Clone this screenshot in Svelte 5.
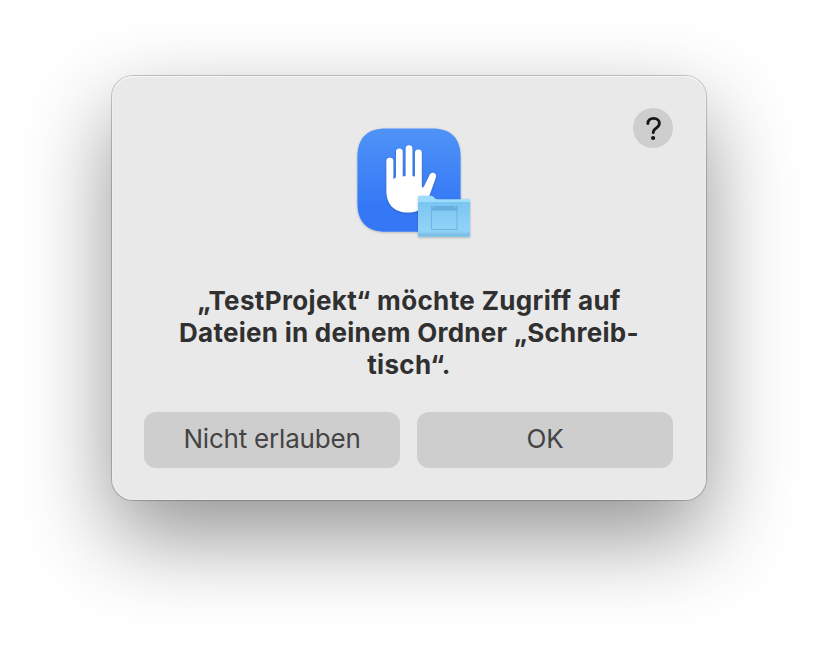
<script>
  const lines = [
    { text: '„TestProjekt“ möchte Zugriff auf', tracking: 0.36 },
    { text: 'Dateien in deinem Ordner „Schreib-', tracking: 0.26 },
    { text: 'tisch“.', tracking: 0.3 }
  ];
</script>

<main>
  <div class="dialog" role="alertdialog" aria-labelledby="title">
    <button class="help" aria-label="Hilfe">
      <svg width="40" height="40" viewBox="0 0 40 40" fill="none">
        <path d="M14.8 15.6C15 12.2 17.2 10.4 20.6 10.4C24.1 10.4 26.4 12.4 26.4 15.3C26.4 17.6 25.2 18.9 23 20.2C20.9 21.5 20.3 22.4 20.2 24.7" stroke="#161616" stroke-width="2.8" stroke-linecap="round" stroke-linejoin="round" />
        <circle cx="20.1" cy="30" r="2.1" fill="#161616" />
      </svg>
    </button>

    <svg class="icon" width="114" height="114" viewBox="357 128 114 114">
      <defs>
        <linearGradient id="tile" x1="0" y1="0" x2="0" y2="1">
          <stop offset="0" stop-color="#5093f6" />
          <stop offset="0.75" stop-color="#3478f6" />
          <stop offset="1" stop-color="#3478f6" />
        </linearGradient>
        <linearGradient id="front" x1="0" y1="0" x2="0" y2="1">
          <stop offset="0" stop-color="#7bc5f2" />
          <stop offset="0.82" stop-color="#91d3f8" />
          <stop offset="0.9" stop-color="#88caee" />
          <stop offset="1" stop-color="#7dbfe5" />
        </linearGradient>
        <filter id="soft" x="-20%" y="-20%" width="140%" height="140%">
          <feDropShadow dx="0" dy="0.7" stdDeviation="0.9" flood-color="#000" flood-opacity="0.25" />
        </filter>
      </defs>
      <path filter="url(#soft)" fill="url(#tile)" d="M386 128.4H432C451 128.4 460.6 138 460.6 157V203C460.6 222 451 231.8 432 231.8H386C367 231.8 357.4 222 357.4 203V157C357.4 138 367 128.4 386 128.4Z" />
      <path filter="url(#soft)" fill="#fff" d="M386.4 161.2A3.45 3.45 0 0 1 393.3 161.2V179.3Q394.3 178.4 396 177.6V151.2A3.4 3.4 0 0 1 402.7 151.2V176.4Q404.2 176.1 405.7 176V148.7A3.35 3.35 0 0 1 412.4 148.7V176.1Q413.7 176.3 415 176.8V153A3.4 3.4 0 0 1 421.8 153V187.3Q422.8 188.2 424 186.5L429.6 175C430.5 173.3 432.3 172.3 434 173C435.8 173.7 436.5 175.5 435.9 177.3L429.8 194.5C426 206.5 419.5 212.6 408.5 212.6C394 212.6 386.4 204 386.4 191Z" />
      <g filter="url(#soft)">
        <path fill="#9ddcfb" d="M418 197.3Q418 195.8 419.5 195.8H431.2Q432.5 195.8 433.4 196.7L435.2 198.5Q436 199.3 437.3 199.3H468.7Q470 199.3 470 200.6V235.5Q470 236.7 468.8 236.7H419.2Q418 236.7 418 235.5Z" />
        <path fill="url(#front)" d="M418 203.2Q418 202 419.2 202H468.8Q470 202 470 203.2V235.5Q470 236.7 468.8 236.7H419.2Q418 236.7 418 235.5Z" />
      </g>
      <path d="M418.3 234.2H469.7" stroke="#79b8dd" stroke-width="0.7" />
      <rect x="431.5" y="206.5" width="25.4" height="23" fill="none" stroke="#70b5e0" stroke-width="1.1" />
      <path d="M431 206H457.4V210.5H431Z" fill="#68addb" />
      <path d="M432.2 207.8H434M454.5 207.8H456.2" stroke="#8fcdf2" stroke-width="0.8" />
    </svg>

    <h1 id="title">
      {#each lines as line}
        <span style="letter-spacing: {line.tracking}px">{line.text}</span>
      {/each}
    </h1>

    <div class="actions">
      <button class="deny">Nicht erlauben</button>
      <button class="ok">OK</button>
    </div>
  </div>
</main>

<style>
  :global(body) {
    margin: 0;
    background: #fff;
  }
  main {
    box-sizing: border-box;
    height: 648px;
    padding: 76px 112px 0;
    overflow: hidden;
    font-family: Inter, 'Liberation Sans', sans-serif;
  }
  .dialog {
    position: relative;
    box-sizing: border-box;
    width: 594px;
    height: 424px;
    padding: 52px 32px 32px;
    display: flex;
    flex-direction: column;
    border-radius: 21px;
    background: #e9e9e9;
    box-shadow:
      inset 0 1px 0 #f7f7f7,
      inset 0 0 0 1px rgba(255, 255, 255, 0.25),
      0 0 0 1px rgba(0, 0, 0, 0.18),
      0 0 3px rgba(0, 0, 0, 0.08),
      0 36px 88px rgba(0, 0, 0, 0.43);
  }
  button {
    border: 0;
    padding: 0;
    background: #cecece;
    font: inherit;
  }
  .help {
    position: absolute;
    top: 32px;
    right: 33px;
    width: 40px;
    height: 40px;
    border-radius: 50%;
  }
  .help svg,
  .icon {
    display: block;
  }
  .icon {
    margin-left: 213px;
    overflow: visible;
    flex: none;
  }
  h1 {
    margin: 43px 0 0;
    display: flex;
    flex-direction: column;
    align-items: center;
    font-size: 26px;
    line-height: 32px;
    font-weight: 700;
    color: #303030;
    white-space: nowrap;
  }
  .actions {
    margin-top: auto;
    display: flex;
    gap: 17px;
    width: 529px;
  }
  .actions button {
    flex: 1;
    height: 56px;
    padding-bottom: 2px;
    border-radius: 12px;
    font-size: 26px;
    line-height: 54px;
    color: #444;
    letter-spacing: -0.2px;
  }
</style>
